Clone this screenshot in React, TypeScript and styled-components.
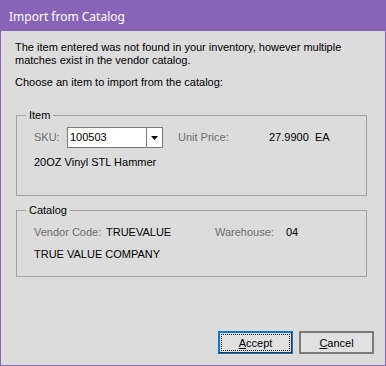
import React from "react";
import styled, { createGlobalStyle } from "styled-components";

const Global = createGlobalStyle`
  html, body { margin: 0; padding: 0; background: #dcdcdc; }
  * { box-sizing: border-box; }
`;

const Window = styled.div`
  width: 386px;
  height: 366px;
  border: 1px solid #8764b8;
  display: flex;
  flex-direction: column;
  background: #dcdcdc;
  font-family: "Liberation Sans", Arial, sans-serif;
  font-size: 11px;
  color: #000;
`;

const TitleBar = styled.div`
  height: 30px;
  flex: none;
  background: #8764b8;
  color: #fff;
  display: flex;
  align-items: center;
  padding-left: 8px;
  font-family: "Noto Sans", "Open Sans", sans-serif;
  font-size: 12px;
`;

const Body = styled.div`
  flex: 1;
  display: flex;
  flex-direction: column;
  padding: 10px 11px 11px 14px;
`;

const Para = styled.p<{ $gap?: number }>`
  margin: ${(p) => p.$gap ?? 0}px 0 0 0;
  line-height: 13px;
`;

const Group = styled.fieldset<{ $top: number; $height: number }>`
  margin: ${(p) => p.$top}px 7px 0 1px;
  height: ${(p) => p.$height}px;
  padding: 0;
  border: 1px solid #a0a0a0;
  min-width: 0;
`;

const Legend = styled.legend`
  margin-left: 9px;
  padding: 0 3px;
  line-height: 13px;
`;

const GroupContent = styled.div`
  display: flex;
  flex-direction: column;
  padding-left: 17px;
`;

const Row = styled.div<{ $top: number }>`
  display: flex;
  align-items: center;
  margin-top: ${(p) => p.$top}px;
  line-height: 13px;
`;

const Label = styled.span<{ $w?: number }>`
  color: #6d6d6d;
  width: ${(p) => (p.$w ? `${p.$w}px` : "auto")};
  flex: none;
`;

const Value = styled.span<{ $w?: number }>`
  width: ${(p) => (p.$w ? `${p.$w}px` : "auto")};
  flex: none;
`;

const Combo = styled.div`
  width: 96px;
  height: 21px;
  flex: none;
  display: flex;
  background: #fff;
  border: 1px solid #7a7a7a;
  margin-right: 15px;
`;

const ComboText = styled.div`
  flex: 1;
  padding-left: 2px;
  display: flex;
  align-items: center;
`;

const ComboButton = styled.div`
  width: 16px;
  border-left: 1px solid #7a7a7a;
  display: flex;
  align-items: center;
  justify-content: center;
  background: #fff;
`;

const ButtonRow = styled.div`
  margin-top: auto;
  display: flex;
  justify-content: flex-end;
  gap: 6px;
`;

const Button = styled.button<{ $default?: boolean }>`
  width: 75px;
  height: 23px;
  font-family: "Liberation Sans", Arial, sans-serif;
  font-size: 11px;
  color: #000;
  background: #e1e1e1;
  padding: 0;
  border: ${(p) => (p.$default ? "1px solid #0078d7" : "2px solid #7a7a7a")};
  box-shadow: ${(p) =>
    p.$default ? "inset -1px -1px 0 0 #333, inset 1px 1px 0 0 #0078d7" : "none"};
  position: relative;
  display: flex;
  align-items: center;
  justify-content: center;
`;

const FocusRect = styled.span`
  position: absolute;
  inset: 2px;
  border: 1px dotted #000;
`;

const Access = styled.span`
  text-decoration: underline;
`;

export default function App() {
  return (
    <>
      <Global />
      <Window>
        <TitleBar>Import from Catalog</TitleBar>
        <Body>
          <Para>
            The item entered was not found in your inventory, however multiple
            <br />
            matches exist in the vendor catalog.
          </Para>
          <Para $gap={9}>Choose an item to import from the catalog:</Para>
          <Group $top={20} $height={87}>
            <Legend>Item</Legend>
            <GroupContent>
              <Row $top={5}>
                <Label $w={33}>SKU:</Label>
                <Combo>
                  <ComboText>100503</ComboText>
                  <ComboButton>
                    <svg width="7" height="4" viewBox="0 0 7 4">
                      <path d="M0 0h7L3.5 4z" fill="#000" />
                    </svg>
                  </ComboButton>
                </Combo>
                <Label $w={91}>Unit Price:</Label>
                <Value $w={46}>27.9900</Value>
                <Value>EA</Value>
              </Row>
              <Row $top={8}>
                <Value>20OZ Vinyl STL Hammer</Value>
              </Row>
            </GroupContent>
          </Group>
          <Group $top={8} $height={73}>
            <Legend>Catalog</Legend>
            <GroupContent>
              <Row $top={9}>
                <Label $w={72}>Vendor Code:</Label>
                <Value $w={109}>TRUEVALUE</Value>
                <Label $w={71}>Warehouse:</Label>
                <Value>04</Value>
              </Row>
              <Row $top={9}>
                <Value>TRUE VALUE COMPANY</Value>
              </Row>
            </GroupContent>
          </Group>
          <ButtonRow>
            <Button $default>
              <FocusRect />
              <span>
                <Access>A</Access>ccept
              </span>
            </Button>
            <Button>
              <span>
                <Access>C</Access>ancel
              </span>
            </Button>
          </ButtonRow>
        </Body>
      </Window>
    </>
  );
}
